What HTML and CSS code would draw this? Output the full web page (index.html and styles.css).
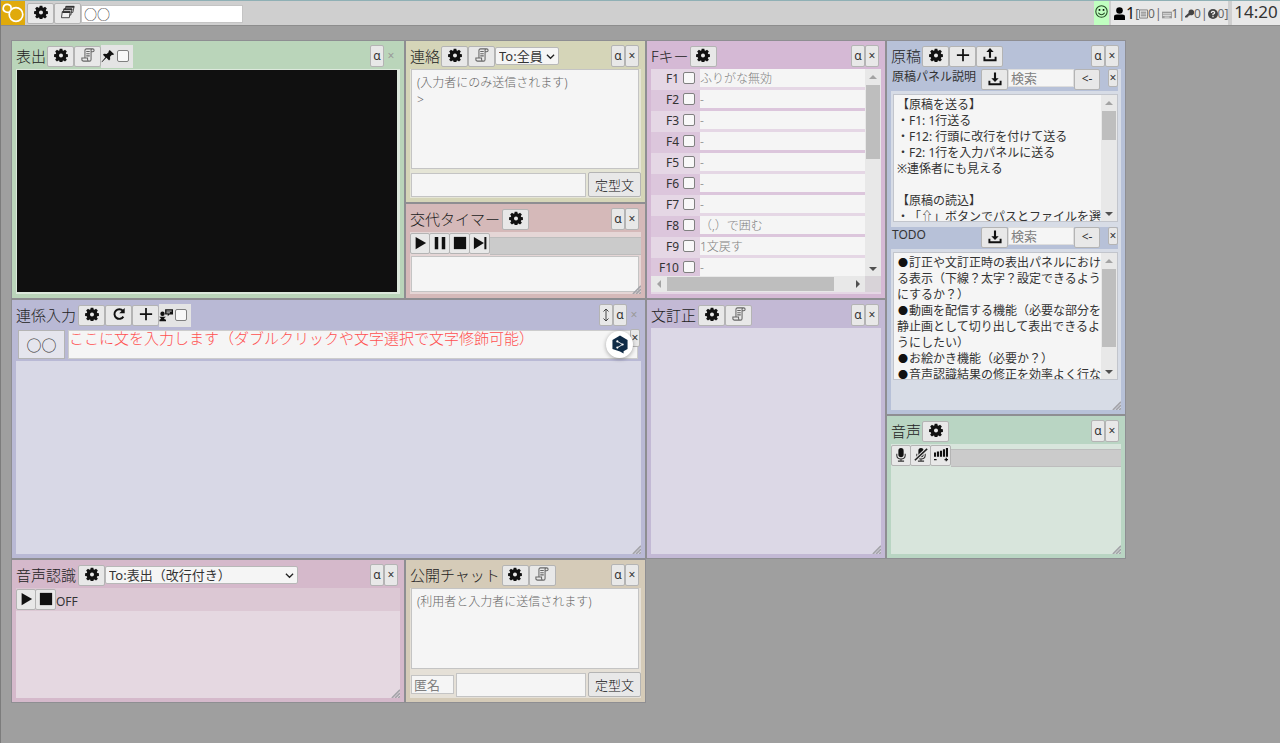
FILE: index.html
```html
<!DOCTYPE html>
<html lang="ja">
<head>
<meta charset="utf-8">
<title>字幕入力</title>
<link rel="stylesheet" href="styles.css">
</head>
<body>
<svg class="defs" aria-hidden="true">
  <symbol id="gear" viewBox="0 0 16 16"><path fill-rule="evenodd" d="M6.500.8h3l.4 2 1 .4 1.700-1.200 2.100 2.100-1.200 1.700.4 1 2 .4v3l-2 .4-.4 1 1.200 1.700-2.100 2.100-1.700-1.200-1 .4-.4 2h-3l-.4-2-1-.4-1.700 1.200-2.100-2.100 1.200-1.700-.4-1-2-.4v-3l2-.4.4-1-1.200-1.700 2.100-2.100 1.700 1.200 1-.4zM8 6.200a2.300 2.300 0 1 0 0 4.600 2.300 2.300 0 0 0 0-4.600z"/></symbol>
  <symbol id="scroll" viewBox="0 0 16 16"><path fill="none" stroke="#666" stroke-width="1.200" d="M4.500 11.500V2.800Q4.500 1 6.300 1H13.200q1.800 0 1.800 1.600T13.200 4.200h-1.700V13q0 2-1.800 2H3q-2 0-2-1.800v-1.700h6.500V13q0 2 2.200 2M11.500 4.200V2.700Q11.500 1 13 1M6 4h4M6 6.500h4M6 9h4"/></symbol>
  <symbol id="windows" viewBox="0 0 16 16"><g fill="#f0f0f0" stroke="#333" stroke-width="1"><path d="M5.500 1.500h9.500l-1.500 7H4.500z"/><path d="M3.200 4.500h9.500l-1.500 7h-9z"/><path d="M1.500 7.500h9l-1 7h-9z"/></g><path stroke="#333" stroke-width="2" d="M5.500 2H15M3.200 5h9.500M1.500 8h9"/></symbol>
  <symbol id="pin" viewBox="0 0 16 16"><path d="M10 1l5 5-1.500.8-1-.3-2.200 2.300.2 3-1.300 1.200-3-3L1 15l-.3-.4L5 9.300 2.200 6.600l1.300-1.200 3 .2L8.900 3.500l-.3-1z"/></symbol>
  <symbol id="plus" viewBox="0 0 16 16"><path stroke="#111" stroke-width="2" d="M8 1v14M1 8h14"/></symbol>
  <symbol id="reload" viewBox="0 0 16 16"><path fill="none" stroke="#111" stroke-width="2.200" d="M12.500 4.500A5.500 5.500 0 1 0 13 11"/><path d="M14.500 1v6.200H8.300z"/></symbol>
  <symbol id="upload" viewBox="0 0 16 16"><path d="M8 0l4.200 4.700H9.200V11H6.800V4.700h-3z"/><path fill="none" stroke="#111" stroke-width="2.200" d="M1.600 10v4h12.800v-4"/></symbol>
  <symbol id="download" viewBox="0 0 16 16"><path d="M8 11.500L3.800 7h3V.5h2.400V7h3z"/><path fill="none" stroke="#111" stroke-width="2.200" d="M1.600 10v4h12.800v-4"/></symbol>
  <symbol id="talk" viewBox="0 0 16 16"><circle cx="4" cy="6.500" r="2.500"/><path d="M.5 15h7.500v-1.500L6 12.500v-1l2-1.500H0l2 1.500v1L.5 13.500zM7 1.500h9v6h-4l-2 2V7.500H7z"/><path stroke="#e4e4e4" stroke-width="1" d="M8.500 3.500h6M8.500 5.500h4"/></symbol>
  <symbol id="play" viewBox="0 0 16 16"><path d="M3 1l12 7-12 7z"/></symbol>
  <symbol id="pause" viewBox="0 0 16 16"><path d="M2 1h4v14H2zM10 1h4v14h-4z"/></symbol>
  <symbol id="stop" viewBox="0 0 16 16"><path d="M1 1h14v14H1z"/></symbol>
  <symbol id="next" viewBox="0 0 16 16"><path d="M1 1l11.500 7L1 15zM13 1h2.300v14H13z"/></symbol>
  <symbol id="mic" viewBox="0 0 16 16"><rect x="5" y="0" width="6" height="10.500" rx="3"/><path fill="none" stroke="#333" stroke-width="1.200" d="M3.200 6.500v2.200Q3.500 12.500 8 12.500t4.800-3.800V6.500M8 12.500V15M4.500 15h7"/></symbol>
  <symbol id="level" viewBox="0 0 16 16"><path d="M0 5h2.300v5H0zM3.300 4h2.500v6H3.300zM6.800 3h2.400v7H6.800zM10.200 1.500h2.400V10h-2.400zM13.600 0H16v10h-2.400zM0 12.500h3v1.500H0zM12 12.500h4v1.500h-4zM13.300 11.200h1.400v4h-1.400z"/></symbol>
  <symbol id="chevron" viewBox="0 0 10 10"><path fill="none" stroke="#222" stroke-width="1.400" d="M1 3l4 4 4-4"/></symbol>
  <symbol id="grip" viewBox="0 0 10 10"><path stroke="#a3a3a8" stroke-width="1.800" d="M1 10l9-9M4.500 10L10 4.500M8 10l2-2"/></symbol>
</svg>

<header class="topbar">
  <svg class="logo" viewBox="0 0 24 24" role="img" aria-label="ロゴ"><g fill="none" stroke="#fff" stroke-width="1.700"><circle cx="15" cy="13.500" r="6.800"/><path d="M10 7.800A3.900 3.900 0 1 0 5 11Q7 11.800 8.500 11"/></g></svg>
  <button class="btn" aria-label="設定"><svg class="icon"><use href="#gear"/></svg></button><button class="btn" aria-label="パネル"><svg class="icon"><use href="#windows"/></svg></button>
  <input class="name-input" aria-label="名前" value="○○">
  <div class="status">
    <span class="smile"><svg viewBox="0 0 16 16" width="13" height="13"><circle cx="8" cy="8" r="7" fill="none" stroke="#234a23" stroke-width="1.300"/><circle cx="5.500" cy="6" r="1.200"/><circle cx="10.500" cy="6" r="1.200"/><path d="M4 9.500q4 5 8 0" fill="none" stroke="#234a23" stroke-width="1.300"/></svg></span>
    <span class="members"><svg class="person" viewBox="0 0 12 14"><circle cx="6" cy="3.800" r="3.600"/><path d="M0 14V10.500Q0 8 3 8h6q3 0 3 2.500V14z"/></svg><span class="total">1</span><span class="counts">[<svg viewBox="0 0 10 10" width="9" height="10"><path fill="none" stroke="#777" d="M.5.5h9v9h-9zM2 3h6M2 5h6M2 7h6"/></svg>0|<svg viewBox="0 0 12 8" width="10" height="8"><path fill="#999" d="M0 0h12v8H0z"/><path stroke="#eee" d="M1 2.500h10M1 4.500h10M3 6.500h6"/></svg>1|<svg viewBox="0 0 10 10" width="9" height="10"><path fill="#444" d="M6.800 0a3.200 3.200 0 1 1-1.300 6L4.600 7H3.700v1H2.800v1H0V7.500L4 3.800A3 3 0 0 1 6.800 0z"/></svg>0|<svg viewBox="0 0 10 10" width="10" height="10"><circle cx="5" cy="5" r="5" fill="#444"/><path fill="none" stroke="#eee" stroke-width="1.300" d="M3.300 4Q3.500 2.300 5 2.300T6.700 3.800Q6.700 4.700 5 5.200V6.200M5 7v1.300"/></svg>0]</span></span>
    <time class="clock">14:20</time>
  </div>
</header>

<main class="workspace">
  <section class="panel green display">
    <header class="head"><h2>表出</h2><button class="btn" aria-label="設定"><svg class="icon"><use href="#gear"/></svg></button><button class="btn" aria-label="ログ"><svg class="icon"><use href="#scroll"/></svg></button><label class="toggle"><svg class="icon"><use href="#pin"/></svg><input type="checkbox" aria-label="固定"></label><span class="tools"><button class="mini">α</button><button class="mini" disabled>×</button></span></header>
    <div class="body"><div class="screen"></div></div>
  </section>

  <div class="stack middle">
    <section class="panel khaki contact">
      <header class="head"><h2>連絡</h2><button class="btn" aria-label="設定"><svg class="icon"><use href="#gear"/></svg></button><button class="btn" aria-label="ログ"><svg class="icon"><use href="#scroll"/></svg></button><span class="pick"><select aria-label="宛先"><option>To:全員</option></select><svg><use href="#chevron"/></svg></span><span class="tools"><button class="mini">α</button><button class="mini">×</button></span></header>
      <div class="body chat"><textarea class="log" aria-label="連絡ログ" placeholder="(入力者にのみ送信されます)&#10;&gt;"></textarea>
        <div class="send"><input class="message" aria-label="連絡文"><button class="phrase">定型文</button></div></div>
    </section>
    <section class="panel red timer">
      <header class="head"><h2>交代タイマー</h2><button class="btn gap" aria-label="設定"><svg class="icon"><use href="#gear"/></svg></button><span class="tools"><button class="mini">α</button><button class="mini">×</button></span></header>
      <div class="body"><div class="player"><button class="key" aria-label="開始"><svg class="icon"><use href="#play"/></svg></button><button class="key" aria-label="一時停止"><svg class="icon"><use href="#pause"/></svg></button><button class="key" aria-label="停止"><svg class="icon"><use href="#stop"/></svg></button><button class="key" aria-label="次へ"><svg class="icon"><use href="#next"/></svg></button><div class="meter"></div></div>
        <textarea class="memo" aria-label="メモ"></textarea><svg class="grip"><use href="#grip"/></svg></div>
    </section>
  </div>

  <section class="panel pink keys">
    <header class="head"><h2>Fキー</h2><button class="btn" aria-label="設定"><svg class="icon"><use href="#gear"/></svg></button><span class="tools"><button class="mini">α</button><button class="mini">×</button></span></header>
    <div class="body key-body">
      <div class="key-list">
        <div class="key-row"><label for="k1">F1</label><input type="checkbox" id="k1"><input class="key-text" aria-label="F1の機能" placeholder="ふりがな無効"></div>
        <div class="key-row"><label for="k2">F2</label><input type="checkbox" id="k2"><input class="key-text" aria-label="F2の機能" placeholder="-"></div>
        <div class="key-row"><label for="k3">F3</label><input type="checkbox" id="k3"><input class="key-text" aria-label="F3の機能" placeholder="-"></div>
        <div class="key-row"><label for="k4">F4</label><input type="checkbox" id="k4"><input class="key-text" aria-label="F4の機能" placeholder="-"></div>
        <div class="key-row"><label for="k5">F5</label><input type="checkbox" id="k5"><input class="key-text" aria-label="F5の機能" placeholder="-"></div>
        <div class="key-row"><label for="k6">F6</label><input type="checkbox" id="k6"><input class="key-text" aria-label="F6の機能" placeholder="-"></div>
        <div class="key-row"><label for="k7">F7</label><input type="checkbox" id="k7"><input class="key-text" aria-label="F7の機能" placeholder="-"></div>
        <div class="key-row"><label for="k8">F8</label><input type="checkbox" id="k8"><input class="key-text" aria-label="F8の機能" placeholder="（,）で囲む"></div>
        <div class="key-row"><label for="k9">F9</label><input type="checkbox" id="k9"><input class="key-text" aria-label="F9の機能" placeholder="1文戻す"></div>
        <div class="key-row"><label for="k10">F10</label><input type="checkbox" id="k10"><input class="key-text" aria-label="F10の機能" placeholder="-"></div>
      </div>
      <div class="bar"><i class="arrow up"></i><i class="thumb long"></i><i class="arrow down"></i></div>
      <div class="bar flat"><i class="arrow left"></i><i class="thumb wide"></i><i class="arrow right"></i></div>
      <div class="corner"></div>
    </div>
  </section>

  <div class="stack side">
    <section class="panel blue script">
      <header class="head"><h2>原稿</h2><button class="btn" aria-label="設定"><svg class="icon"><use href="#gear"/></svg></button><button class="btn" aria-label="追加"><svg class="icon"><use href="#plus"/></svg></button><button class="btn" aria-label="読込"><svg class="icon"><use href="#upload"/></svg></button><span class="tools"><button class="mini">α</button><button class="mini">×</button></span></header>
      <div class="body">
        <article class="doc">
          <div class="doc-head"><h3>原稿パネル説明</h3><button class="btn" aria-label="保存"><svg class="icon"><use href="#download"/></svg></button><input class="search" aria-label="検索" placeholder="検索"><button class="btn back">&lt;-</button><button class="tiny">×</button></div>
          <div class="doc-box"><div class="doc-text">【原稿を送る】
・F1: 1行送る
・F12: 行頭に改行を付けて送る
・F2: 1行を入力パネルに送る
※連係者にも見える

【原稿の読込】
・「⇧」ボタンでパスとファイルを選</div><div class="bar"><i class="arrow up"></i><i class="thumb short"></i><i class="arrow down"></i></div></div>
        </article>
        <article class="doc">
          <div class="doc-head"><h3>TODO</h3><button class="btn" aria-label="保存"><svg class="icon"><use href="#download"/></svg></button><input class="search" aria-label="検索" placeholder="検索"><button class="btn back">&lt;-</button><button class="tiny">×</button></div>
          <div class="doc-box"><div class="doc-text"><span class="dot">●</span>訂正や文訂正時の表出パネルにおけ
る表示（下線？太字？設定できるよう
にするか？）
<span class="dot">●</span>動画を配信する機能（必要な部分を
静止画として切り出して表出できるよ
うにしたい）
<span class="dot">●</span>お絵かき機能（必要か？）
<span class="dot">●</span>音声認識結果の修正を効率よく行な</div><div class="bar"><i class="arrow up"></i><i class="thumb long"></i><i class="arrow down"></i></div></div>
        </article>
        <svg class="grip"><use href="#grip"/></svg>
      </div>
    </section>
    <section class="panel mint audio">
      <header class="head"><h2>音声</h2><button class="btn" aria-label="設定"><svg class="icon"><use href="#gear"/></svg></button><span class="tools"><button class="mini">α</button><button class="mini">×</button></span></header>
      <div class="body"><div class="player"><button class="key" aria-label="マイク"><svg class="icon"><use href="#mic"/></svg></button><button class="key" aria-label="ミュート"><svg class="icon" viewBox="0 0 16 16"><use href="#mic" width="16" height="16"/><path d="M1 14L15 1" stroke="#e8e8e8" stroke-width="4"/><path d="M1 14L15 1" stroke="#222" stroke-width="1.800"/></svg></button><button class="key" aria-label="音量"><svg class="icon"><use href="#level"/></svg></button><div class="meter"></div></div><svg class="grip"><use href="#grip"/></svg></div>
    </section>
  </div>

  <section class="panel violet link">
    <header class="head"><h2>連係入力</h2><button class="btn gap" aria-label="設定"><svg class="icon"><use href="#gear"/></svg></button><button class="btn" aria-label="更新"><svg class="icon"><use href="#reload"/></svg></button><button class="btn" aria-label="追加"><svg class="icon"><use href="#plus"/></svg></button><label class="toggle"><svg class="icon"><use href="#talk"/></svg><input type="checkbox" aria-label="発言者表示"></label><span class="tools flush"><button class="mini" aria-label="上下"><svg class="updown" viewBox="0 0 8 14"><path fill="none" stroke="#444" d="M4 1v12M1.500 3.500L4 1l2.500 2.500M1.500 10.500L4 13l2.500-2.500"/></svg></button><button class="mini">α</button><button class="mini" disabled>×</button></span></header>
    <div class="body">
      <div class="entry"><button class="speaker">○○</button><div class="editor" contenteditable="true">ここに文を入力します（ダブルクリックや文字選択で文字修飾可能）</div>
        <button class="tiny close">×</button>
        <span class="badge"><svg viewBox="0 0 18 20" width="16" height="19"><path fill="#0f2b46" d="M9 0l8.500 5v10L13 17.500V20l-4-2.200L.500 15V5z"/><path stroke="#fff" fill="none" d="M6 6.500l6 3.500-6 3.500"/><g fill="#fff"><circle cx="6" cy="6.500" r="1.200"/><circle cx="12" cy="10" r="1.200"/><circle cx="6" cy="13.500" r="1.200"/></g></svg></span></div>
      <svg class="grip"><use href="#grip"/></svg>
    </div>
  </section>

  <section class="panel purple fix">
    <header class="head"><h2>文訂正</h2><button class="btn gap" aria-label="設定"><svg class="icon"><use href="#gear"/></svg></button><button class="btn" aria-label="ログ"><svg class="icon"><use href="#scroll"/></svg></button><span class="tools"><button class="mini">α</button><button class="mini">×</button></span></header>
    <div class="body"><svg class="grip"><use href="#grip"/></svg></div>
  </section>

  <section class="panel rose speech">
    <header class="head"><h2>音声認識</h2><button class="btn gap" aria-label="設定"><svg class="icon"><use href="#gear"/></svg></button><span class="pick wide-pick"><select aria-label="出力先"><option>To:表出（改行付き）</option></select><svg><use href="#chevron"/></svg></span><span class="tools"><button class="mini">α</button><button class="mini">×</button></span></header>
    <div class="body"><div class="recog"><button class="key" aria-label="開始"><svg class="icon"><use href="#play"/></svg></button><button class="key" aria-label="停止"><svg class="icon"><use href="#stop"/></svg></button><span>OFF</span></div><svg class="grip"><use href="#grip"/></svg></div>
  </section>

  <section class="panel sand public">
    <header class="head"><h2>公開チャット</h2><button class="btn gap" aria-label="設定"><svg class="icon"><use href="#gear"/></svg></button><button class="btn" aria-label="ログ"><svg class="icon"><use href="#scroll"/></svg></button><span class="tools"><button class="mini">α</button><button class="mini">×</button></span></header>
    <div class="body chat"><textarea class="log" aria-label="公開ログ" placeholder="(利用者と入力者に送信されます)"></textarea>
      <div class="send"><input class="anon" aria-label="名前" placeholder="匿名"><input class="message" aria-label="発言"><button class="phrase">定型文</button></div></div>
  </section>
</main>
</body>
</html>
```
FILE: styles.css
```css
* { box-sizing: border-box; }
body, button, input, select, textarea {
  font-family: "Noto Sans", "Noto Sans CJK JP", sans-serif;
  font-weight: 400;
  text-spacing-trim: space-all;
}
body {
  margin: 0;
  min-height: 100vh;
  background: #9f9f9f;
  border-left: 1px solid #7c7c7c;
  color: #333;
  font-size: 12px;
}
.defs { display: none; }
button, input, select, textarea { margin: 0; color: #333; border-radius: 0; outline: 0; }
button { padding: 0; background: #e8e8e8; border: 1px solid #b4b4b4; border-radius: 2px; }
.icon { width: 14px; height: 14px; display: block; flex: none; fill: #111; }
input[type="checkbox"] {
  appearance: none;
  width: 12px;
  height: 12px;
  flex: none;
  background: #f8f8f8;
  border: 1px solid #808080;
  border-radius: 2px;
}

.topbar {
  display: flex;
  align-items: center;
  height: 26px;
  background: #cfcfcf;
  border-top: 1px solid #8fb0b5;
  border-bottom: 1px solid #8d8d8d;
}
.logo { width: 24px; height: 24px; background: #e0aa0c; margin-right: 2px; }
.btn { width: 27px; height: 21px; flex: none; display: flex; justify-content: center; align-items: center; padding-bottom: 2px; }
.name-input { width: 162px; height: 18px; padding: 0 2px 2px; border: 1px solid #c4c4c4; background: #fff; font-size: 13px; margin-top: 2px; }
.status { margin-left: auto; align-self: stretch; display: flex; }
.smile { width: 15px; margin-right: 2px; background: #c0ffc0; display: flex; justify-content: center; padding-top: 4px; }
.members { width: 117px; margin-right: 4px; background: #e8e8e8; display: flex; align-items: center; padding: 0 3px; }
.person { width: 11px; height: 13px; flex: none; }
.total { font-size: 16px; line-height: 22px; color: #111; margin-left: 1px; }
.counts { color: #666; font-size: 12px; white-space: nowrap; }
.counts svg { vertical-align: -1px; }
.clock { width: 48px; background: #e8e8e8; font-size: 17px; line-height: 22px; text-align: center; }

.workspace {
  display: grid;
  grid-template-columns: minmax(0, 394fr) minmax(0, 241fr) minmax(0, 240fr) minmax(0, 240fr);
  grid-template-rows: minmax(259px, auto) minmax(260px, auto) minmax(144px, auto);
  padding: 14px 154px 14px 10px;
}
.display { grid-area: 1 / 1; }
.middle { grid-area: 1 / 2; }
.keys { grid-area: 1 / 3; }
.side { grid-area: 1 / 4 / 3; }
.link { grid-area: 2 / 1 / 3 / 3; }
.fix { grid-area: 2 / 3; }
.speech { grid-area: 3 / 1; }
.public { grid-area: 3 / 2; }
.stack { display: flex; flex-direction: column; min-width: 0; }
.contact { flex: 1 1 163px; }
.timer { flex: 1 1 96px; }
.script { flex: 1 1 375px; }
.audio { flex: 1 1 144px; }

.panel { display: flex; flex-direction: column; min-width: 0; border: 1px solid #8e8e92; padding: 4px; background: var(--frame); }
.green { --frame: #bad5ba; --fill: #dce8dc; }
.khaki { --frame: #d5d5b8; --fill: #e5e5d6; }
.red { --frame: #d5b9b9; --fill: #e5d6d6; }
.pink { --frame: #d5b9d5; --fill: #e5d7e5; }
.blue { --frame: #b7c1d8; --fill: #d7dce6; }
.mint { --frame: #b9d5c3; --fill: #d8e5dc; }
.violet { --frame: #b9b9d5; --fill: #d8d8e6; }
.purple { --frame: #c3b9d5; --fill: #dcd8e6; }
.rose { --frame: #d5b9cb; --fill: #e5d8e1; }
.sand { --frame: #d5cbb8; --fill: #e5e0d7; }

.head { height: 24px; flex: none; display: flex; align-items: center; padding-bottom: 2px; }
.head h2 { margin: 0 1px 0 0; font-size: 15px; line-height: 22px; font-weight: 300; color: #222; white-space: nowrap; }
.gap { margin-left: 1px; }
.toggle { width: 32px; height: 23px; display: flex; align-items: center; gap: 2px; background: #e4e4e4; }
.tools { display: flex; margin-left: auto; padding-right: 2px; }
.flush { padding-right: 0; }
.mini { width: 14px; height: 22px; font-size: 12px; line-height: 18px; display: flex; justify-content: center; align-items: center; }
.mini:disabled { background: transparent; border-color: transparent; color: #999; }
.updown { width: 8px; height: 14px; }
.body { position: relative; flex: 1; min-height: 0; background: var(--fill); }
.grip { position: absolute; right: 0; bottom: 0; width: 9px; height: 9px; }

.display .body { display: flex; padding: 1px 3px 2px 1px; }
.screen { flex: 1; background: #101010; }

.pick { position: relative; width: 64px; height: 18px; }
.wide-pick { width: 193px; }
.pick select { appearance: none; width: 100%; height: 18px; padding: 0 3px; background: #f5f5f5; border: 1px solid #b8b8b8; border-radius: 2px; font-size: 13px; line-height: 16px; }
.pick svg { position: absolute; right: 4px; top: 5px; width: 9px; height: 9px; pointer-events: none; }

.chat { display: flex; flex-direction: column; gap: 3px; padding: 0 0 1px 1px; }
textarea { display: block; resize: none; background: #f5f5f5; border: 1px solid #c4c4c4; font-size: 12px; }
.log { flex: 1 1 0px; min-height: 0; margin-right: 2px; padding: 4px 5px; line-height: 17px; overflow: hidden; }
::placeholder { color: #808080; opacity: 1; }
.log::placeholder { color: #666; font-weight: 300; }
.send { display: flex; align-items: center; gap: 2px; height: 25px; flex: none; }
.message { flex: 1; min-width: 0; height: 24px; border: 1px solid #c4c4c4; background: #f5f5f5; }
.anon { width: 43px; height: 19px; padding: 0 2px; border: 1px solid #c4c4c4; background: #f5f5f5; font-size: 13px; }
.phrase { width: 53px; height: 25px; font-size: 13px; font-weight: 300; color: #111; }

.player { display: flex; align-items: center; height: 23px; }
.key { width: 20px; height: 21px; flex: none; display: flex; justify-content: center; align-items: center; padding-bottom: 2px; margin-right: -1px; }
.key + .key { width: 21px; }
.meter { flex: 1; height: 18px; align-self: flex-end; margin-left: 1px; background: #cbcbcb; border: 1px solid #bdbdbd; border-width: 1px 0; }
.memo { width: calc(100% - 3px); height: 36px; margin: 1px 0 0 1px; }

.key-body { display: grid; grid-template-columns: minmax(0, 1fr) 16px; grid-template-rows: minmax(0, 1fr) 16px; padding-bottom: 2px; }
.key-list { overflow: hidden; contain: size; }
.key-row { display: flex; align-items: center; height: 21px; background: #e5d7e5; padding-bottom: 3px; }
.key-row:nth-child(even) { background: #dcc6dc; }
.key-row label { width: 28px; margin-right: 4px; text-align: right; line-height: 16px; padding-top: 2px; }
.key-text { flex: 1; min-width: 0; height: 18px; margin-left: 5px; padding: 0; border: 0; background: #f5f5f5; font-size: 12px; }
.key-text::placeholder { color: #808080; font-weight: 300; }

.bar { width: 16px; background: #e8e8e8; display: flex; flex-direction: column; align-items: center; }
.bar .down { margin: auto 0 5px; }
.arrow { flex: none; width: 0; height: 0; border: 4px solid transparent; }
.up { border-top: 0; border-bottom-color: #a3a3a3; margin: 6px 0; }
.down { border-bottom: 0; border-top-color: #505050; }
.thumb { flex: none; width: 14px; background: #bebebe; }
.long { height: 74px; }
.doc .long { height: 78px; }
.short { height: 29px; }
.flat { width: auto; flex-direction: row; }
.left { border-left: 0; border-right-color: #a3a3a3; margin: 0 6px; }
.right { border-right: 0; border-left-color: #505050; margin: 0 5px 0 auto; }
.wide { width: 78%; height: 14px; }
.corner { background: #d8d3d8; }

.doc { display: flex; flex-direction: column; gap: 3px; height: 158px; padding-bottom: 5px; }
.doc-head { display: flex; align-items: flex-start; height: 22px; margin-right: 3px; background: var(--frame); }
.doc-head h3 { flex: 1; min-width: 0; margin: 0; padding-left: 1px; font-size: 12px; line-height: 16px; font-weight: 400; white-space: nowrap; }
.search { width: 66px; height: 18px; padding: 0 2px; border: 1px solid #ddd; background: #f5f5f5; font-size: 13px; }
.back { width: 26px; font-size: 12px; line-height: 16px; }
.tiny { width: 10px; height: 18px; margin-left: 8px; font-size: 12px; line-height: 14px; display: flex; justify-content: center; align-items: center; }
.doc-box { flex: 1; min-height: 0; display: flex; margin: 0 3px 0 2px; border: 1px solid #c2c5cc; background: #f5f5f5; }
.doc-text { flex: 1; min-width: 0; padding: 2px 0 0 3px; font-size: 12px; line-height: 16px; white-space: pre; overflow: hidden; }
.dot { display: inline-block; width: 12px; font-size: 10px; line-height: 12px; text-align: center; color: #111; }

.entry { position: relative; display: flex; gap: 3px; height: 33px; padding: 2px 3px 2px 2px; background: var(--frame); }
.speaker { width: 47px; background: #e5e5ed; border-radius: 0; font-size: 15px; }
.editor { flex: 1; border: 1px solid #ccc; background: #f5f5f5; color: #ff5050; font-size: 15px; font-weight: 300; line-height: 15px; }
.close { position: absolute; right: 1px; top: 1px; margin: 0; }
.badge { position: absolute; right: 8px; top: 3px; width: 27px; height: 27px; border-radius: 50%; background: #fff; box-shadow: 0 1px 4px #0005; display: flex; align-items: center; justify-content: center; }
.recog { display: flex; align-items: center; height: 23px; background: #dcc8d4; }
.recog span { margin-left: 1px; padding-top: 4px; line-height: 16px; }
```
